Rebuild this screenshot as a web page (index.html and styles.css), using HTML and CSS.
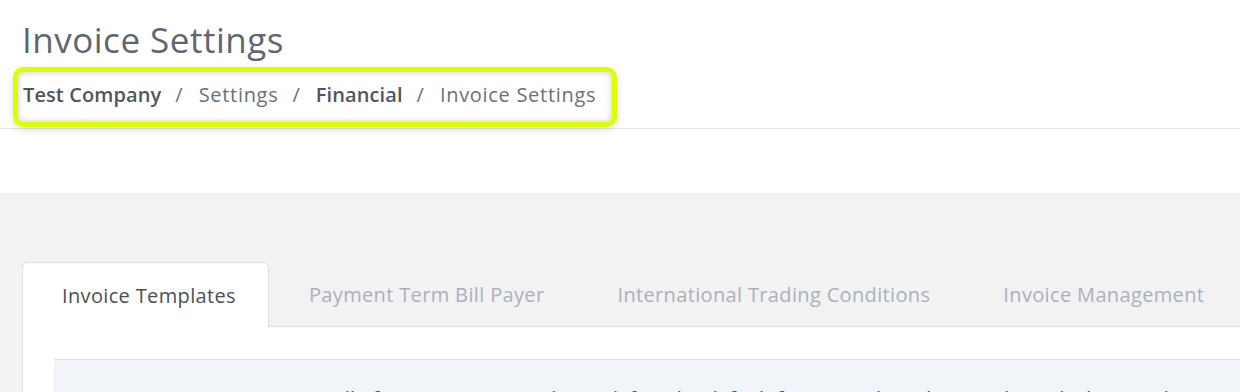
FILE: index.html
```html
<!DOCTYPE html>
<html lang="en">
<head>
<meta charset="utf-8">
<title>Invoice Settings</title>
<link rel="stylesheet" href="styles.css">
</head>
<body>
<header class="page-header">
  <h1 class="page-title">Invoice Settings</h1>
  <nav class="breadcrumb">
    <a class="crumb crumb-strong" href="#">Test Company</a>
    <span class="sep">/</span>
    <span class="crumb">Settings</span>
    <span class="sep">/</span>
    <a class="crumb crumb-strong" href="#">Financial</a>
    <span class="sep">/</span>
    <span class="crumb">Invoice Settings</span>
  </nav>
  <div class="highlight"></div>
</header>
<div class="spacer"></div>
<main class="main">
  <div class="tabs">
    <div class="tab active">Invoice Templates</div>
    <div class="tab">Payment Term Bill Payer</div>
    <div class="tab">International Trading Conditions</div>
    <div class="tab">Invoice Management</div>
    <div class="tab-fill"></div>
  </div>
  <section class="panel">
    <div class="notice">
      <p>Here you can manage all of your invoice templates, define the default format and set the template which is used</p>
    </div>
  </section>
</main>
</body>
</html>
```

FILE: styles.css
```css
* { box-sizing: border-box; }
html, body { margin: 0; padding: 0; }
body {
  font-family: "Open Sans", "Noto Sans", sans-serif;
  background: #ffffff;
  color: #5f6670;
  overflow: hidden;
  height: 392px;
}
.page-header {
  position: relative;
  padding: 17px 22px 0 22px;
  height: 129px;
  border-bottom: 1px solid #e6e6e8;
}
.page-title {
  margin: 0;
  font-size: 35px;
  font-weight: 400;
  line-height: 46px;
  letter-spacing: 0.5px;
  color: #5f6670;
}
.breadcrumb {
  margin-top: 18px;
  display: flex;
  align-items: baseline;
  font-size: 20px;
  line-height: 28px;
  padding-left: 1px;
}
.crumb { color: #6b7079; text-decoration: none; letter-spacing: 0.7px; }
.crumb-strong { color: #50565e; font-weight: 600; letter-spacing: 0.1px; }
.sep { color: #6b7079; margin: 0 16px 0 14px; }
.highlight {
  position: absolute;
  left: 13px;
  top: 67px;
  width: 604px;
  height: 60px;
  border: 5px solid #dcff00;
  border-radius: 10px;
  box-shadow: inset 0 0 6px rgba(0,0,0,0.22), 0 3px 8px rgba(0,0,0,0.12);
}
.spacer { height: 64px; }
.main {
  background: #f2f2f2;
  padding: 69px 0 0 22px;
  height: 199px;
}
.tabs {
  display: flex;
  height: 65px;
}
.tab {
  padding: 0 33px 0 40px;
  display: flex;
  align-items: center;
  font-size: 20px;
  letter-spacing: 0.35px;
  color: #a9b1be;
  border-bottom: 1px solid #e0e0e0;
  white-space: nowrap;
}
.tab.active {
  padding-left: 39px;
  padding-right: 32px;
  background: #ffffff;
  color: #4b5058;
  border: 1px solid #e0e0e0;
  border-bottom: none;
  border-radius: 6px 6px 0 0;
}
.tab-fill { flex: 1; border-bottom: 1px solid #e0e0e0; }
.panel {
  background: #ffffff;
  border-left: 1px solid #e0e0e0;
  padding: 32px 0 0 31px;
  height: 80px;
}
.notice {
  background: #f1f4f9;
  border-top: 1px solid #dde2e9;
  height: 60px;
  padding-top: 25px;
}
.notice p {
  margin: 0;
  font-size: 20px;
  line-height: 28px;
  color: #4b5058;
  text-align: center;
  white-space: nowrap;
}
```
